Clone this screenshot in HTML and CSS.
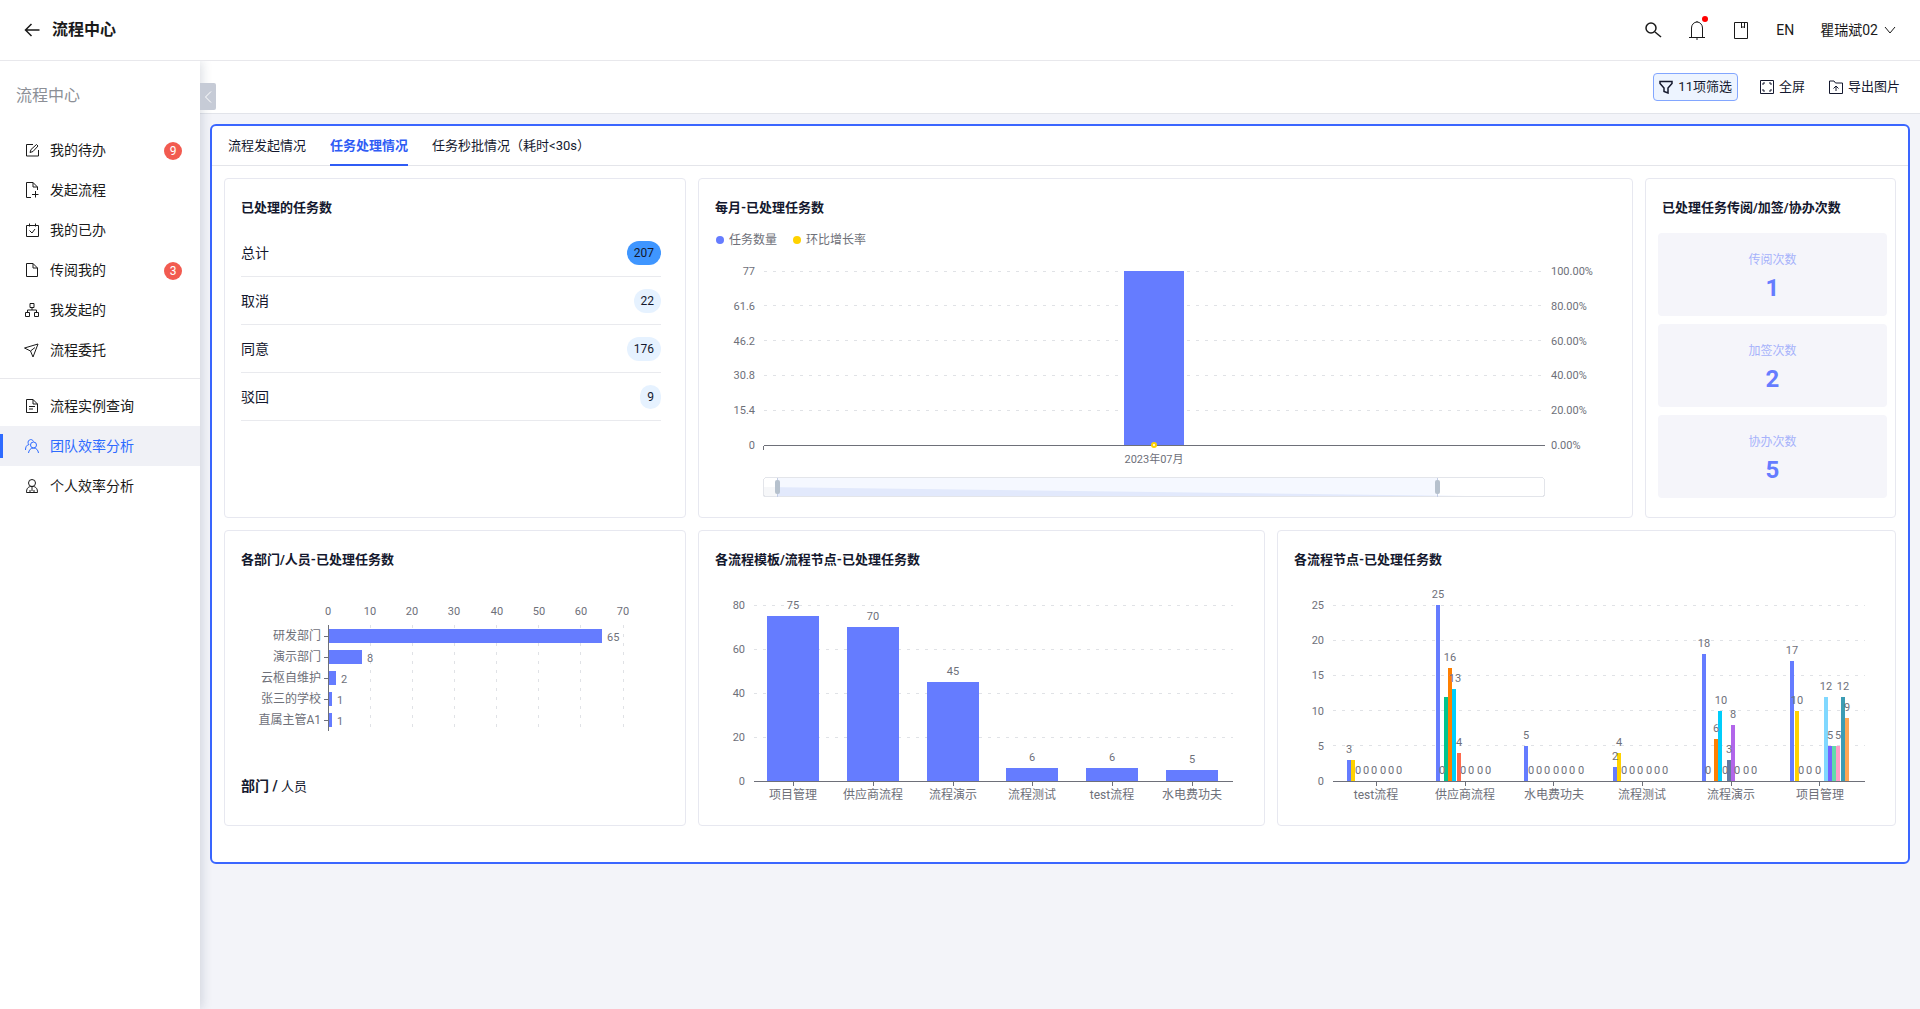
FILE: index.html
```
<!DOCTYPE html>
<html lang="zh-CN">
<head>
    <meta charset="UTF-8">
    <meta name="viewport" content="width=device-width, initial-scale=1.0">
    <title>流程中心</title>
    <link rel="stylesheet" href="styles.css">
</head>
<body>

    <header class="header">
        <button class="icon-btn back" aria-label="返回">
            <svg width="16" height="16" viewBox="0 0 16 16"><path d="M15.500 8H1.500M7.500 2L1.500 8l6 6"/></svg>
        </button>
        <h1>流程中心</h1>
        <div class="header-right">
            <button class="icon-btn search" aria-label="搜索">
                <svg width="18" height="18" viewBox="0 0 18 18"><circle cx="7" cy="7" r="5"/><path d="M11 11l6 5"/></svg>
            </button>
            <button class="icon-btn bell" aria-label="消息">
                <svg width="18" height="22" viewBox="0 0 18 22"><path d="M3.500 18V9a5.500 6 0 0 1 11 0v9M1 18.500h16M9 2v1M9 19v2"/></svg>
                <span class="dot"></span>
            </button>
            <button class="icon-btn" aria-label="文档">
                <svg width="18" height="20" viewBox="0 0 18 20"><path d="M2.500 2.500h13v16h-13zM9.500 3v5l1.500-1.500L12.500 8V3"/></svg>
            </button>
            <button class="text-btn">EN</button>
            <button class="text-btn user">瞿瑞斌02
                <svg width="12" height="10" viewBox="0 0 12 10"><path d="M1 2l5 6 5-6"/></svg>
            </button>
        </div>
    </header>

    <div class="layout">
        <aside class="sidebar">
            <h2>流程中心</h2>
            <nav>
                <a class="menu-item" href="#">
                    <svg width="16" height="16" viewBox="0 0 16 16"><path d="M9 2.500H2.500v11.500h12V8M6 10.500l1-3L12.500 2.500l1.500 1.500L9 9.500z"/></svg>
                    我的待办<span class="count">9</span>
                </a>
                <a class="menu-item" href="#">
                    <svg width="16" height="16" viewBox="0 0 16 16"><path d="M7 15.500H2.500V.5H9l4.500 4.500v3M9 .5V5h4.500M11.500 9v6.500M8 12.500h6.500"/></svg>
                    发起流程
                </a>
                <a class="menu-item" href="#">
                    <svg width="16" height="16" viewBox="0 0 16 16"><path d="M2.500 3.500h12v11h-12zM5.500 1.500v3M11.500 1.500v3M5.500 8.500l2.500 2.500 3-4"/></svg>
                    我的已办
                </a>
                <a class="menu-item" href="#">
                    <svg width="16" height="16" viewBox="0 0 16 16"><path d="M2.500 1.500H9l4.500 4.500v8.500h-11zM9 1.500V6h4.500"/></svg>
                    传阅我的<span class="count">3</span>
                </a>
                <a class="menu-item" href="#">
                    <svg width="16" height="16" viewBox="0 0 16 16"><path d="M6 1.500h4v4H6zM1.500 10.500h4v4h-4zM10.500 10.500h4v4h-4zM8 5.500V8M3.500 10.500V8h9v2.500"/></svg>
                    我发起的
                </a>
                <a class="menu-item" href="#">
                    <svg width="16" height="16" viewBox="0 0 16 16"><path d="M.5 6L14 2l-5 13-2.500-6zM6.500 9L11 5.500"/></svg>
                    流程委托
                </a>
                <hr>
                <a class="menu-item" href="#">
                    <svg width="16" height="16" viewBox="0 0 16 16"><path d="M2.500 1.500H9l4.500 4.500v8.500h-11zM9 1.500V6h4.500M5 8.500h6M5 11h4"/></svg>
                    流程实例查询
                </a>
                <a class="menu-item active" href="#">
                    <svg width="16" height="16" viewBox="0 0 16 16"><path d="M9.500 3.500a2.800 2.800 0 1 0-4.500 3M1.500 12c0-3 1-5 3.500-5.500"/><circle cx="9.500" cy="7" r="3"/><path d="M4.500 15c.5-3 2-5 5-5s4.500 2 5 5"/></svg>
                    团队效率分析
                </a>
                <a class="menu-item" href="#">
                    <svg width="16" height="16" viewBox="0 0 16 16"><circle cx="8" cy="5" r="3.500"/><path d="M2.500 14.500c0-4 1.500-5.500 4-6h3c2.500.5 4 2 4 6zM8 9v4M6 14.500V12M10 14.500V12"/></svg>
                    个人效率分析
                </a>
            </nav>
            <button class="collapse" aria-label="收起">
                <svg width="8" height="14" viewBox="0 0 8 14"><path d="M7 1.500L1.500 7 7 12.500"/></svg>
            </button>
        </aside>

        <main class="main">
            <div class="toolbar">
                <button class="tool filter">
                    <svg width="14" height="14" viewBox="0 0 14 14"><path d="M1 1.500h12v2L9 8v5l-4-1.500V8L1 3.500z"/></svg>
                    11项筛选
                </button>
                <button class="tool">
                    <svg width="14" height="14" viewBox="0 0 14 14"><path d="M.5.5h13v13H.5zM3 5V3h2M9 3h2v2M11 9v2H9M5 11H3V9"/></svg>
                    全屏
                </button>
                <button class="tool">
                    <svg width="14" height="14" viewBox="0 0 14 14"><path d="M.5 1H5l1.500 2h7v10.500H.5zM7 11V6M4.500 8.500L7 6l2.500 2.500"/></svg>
                    导出图片
                </button>
            </div>

            <section class="panel">
                <div class="tabs" role="tablist">
                    <button class="tab" role="tab">流程发起情况</button>
                    <button class="tab active" role="tab" aria-selected="true">任务处理情况</button>
                    <button class="tab" role="tab">任务秒批情况（耗时&lt;30s）</button>
                </div>

                <div class="row row-top">
                    <div class="card">
                        <h3>已处理的任务数</h3>
                        <ul class="totals">
                            <li>总计<span class="pill main-pill">207</span></li>
                            <li>取消<span class="pill">22</span></li>
                            <li>同意<span class="pill">176</span></li>
                            <li>驳回<span class="pill">9</span></li>
                        </ul>
                    </div>
                    <div class="card">
                        <h3>每月-已处理任务数</h3>
                        <div class="legend">
                            <span class="legend-item">任务数量</span>
                            <span class="legend-item rate">环比增长率</span>
                        </div>
                        <svg class="chart" id="monthChart" height="264"></svg>
                    </div>
                    <div class="card">
                        <h3>已处理任务传阅/加签/协办次数</h3>
                        <div class="stats">
                            <div class="stat"><span>传阅次数</span><strong>1</strong></div>
                            <div class="stat"><span>加签次数</span><strong>2</strong></div>
                            <div class="stat"><span>协办次数</span><strong>5</strong></div>
                        </div>
                    </div>
                </div>

                <div class="row row-bottom">
                    <div class="card">
                        <h3>各部门/人员-已处理任务数</h3>
                        <svg class="chart" id="deptChart" height="200"></svg>
                        <div class="crumb"><b>部门 /</b> <a href="#">人员</a></div>
                    </div>
                    <div class="card">
                        <h3>各流程模板/流程节点-已处理任务数</h3>
                        <svg class="chart" id="flowChart" height="250"></svg>
                    </div>
                    <div class="card">
                        <h3>各流程节点-已处理任务数</h3>
                        <svg class="chart" id="nodeChart" height="250"></svg>
                    </div>
                </div>
            </section>
        </main>
    </div>

    <script src="charts.js"></script>
</body>
</html>
```
FILE: styles.css
```
* {
    box-sizing: border-box;
}
body {
    margin: 0;
    min-height: 100vh;
    display: flex;
    flex-direction: column;
    font-family: Roboto, "Noto Sans CJK SC", sans-serif;
    font-size: 14px;
    line-height: 20px;
    color: #1a1a1a;
    background-color: #f3f4f9;
}
h1, h2, h3, ul {
    margin: 0;
    padding: 0;
}
button {
    padding: 0;
    border: none;
    background: none;
    font: inherit;
    color: inherit;
    cursor: pointer;
}
a {
    color: inherit;
    text-decoration: none;
}
svg {
    display: block;
    flex: none;
    fill: none;
    stroke: currentColor;
}

/* header */
.header {
    display: flex;
    align-items: center;
    height: 61px;
    padding: 0 24px;
    background-color: #ffffff;
    border-bottom: 1px solid #e8e8ec;
}
.header h1 {
    margin-left: 12px;
    font-size: 16px;
}
.back,
.search {
    stroke-width: 1.5;
}
.header-right {
    display: flex;
    align-items: center;
    gap: 26px;
    margin-left: auto;
}
.bell {
    position: relative;
}
.dot {
    position: absolute;
    top: -3px;
    right: -2px;
    width: 6px;
    height: 6px;
    border-radius: 50%;
    background-color: #ff0000;
}
.user {
    display: flex;
    align-items: center;
    gap: 6px;
}

/* sidebar */
.layout {
    display: flex;
    flex: 1;
}
.sidebar {
    position: relative;
    z-index: 1;
    width: 200px;
    flex: none;
    background-color: #ffffff;
    box-shadow: 2px 0 10px rgba(30, 50, 80, 0.16);
    clip-path: inset(0 -20px 0 0);
}
.sidebar h2 {
    padding: 23px 16px 22px;
    font-size: 16px;
    line-height: 24px;
    font-weight: normal;
    color: #8c8f96;
}
.sidebar hr {
    margin: 8px 0 7px;
    border: none;
    border-top: 1px solid #e8e8ec;
}
.menu-item {
    display: flex;
    align-items: center;
    gap: 10px;
    height: 40px;
    padding: 0 18px 0 24px;
}
.menu-item.active {
    color: #2e6bff;
    background: linear-gradient(#2e6bff, #2e6bff) left center / 3px 24px no-repeat #f0f1f6;
}
.count {
    width: 18px;
    margin: 2px 0 0 auto;
    border-radius: 9px;
    font-size: 12px;
    line-height: 18px;
    text-align: center;
    color: #ffffff;
    background-color: #f25b50;
}
.collapse {
    position: absolute;
    top: 22px;
    left: 200px;
    display: flex;
    align-items: center;
    justify-content: center;
    width: 16px;
    height: 27px;
    border-radius: 0 2px 2px 0;
    color: #ffffff;
    background-color: #c6cbd6;
}

/* toolbar */
.main {
    flex: 1;
    min-width: 0;
}
.toolbar {
    display: flex;
    align-items: center;
    justify-content: flex-end;
    gap: 20px;
    height: 53px;
    padding: 0 18px;
    font-size: 13px;
    color: #14182e;
    background-color: #ffffff;
    border-bottom: 1px solid #e2e4ea;
}
.tool {
    display: flex;
    align-items: center;
    gap: 5px;
    height: 28px;
    padding: 0 2px;
}
.filter {
    padding: 0 5px;
    border: 1px solid #82a6ff;
    border-radius: 4px;
    background-color: #edf4ff;
}
.filter svg {
    stroke-width: 1.5;
}

/* panel */
.panel {
    margin: 10px;
    padding-bottom: 36px;
    border: 2px solid #3a66ff;
    border-radius: 6px;
    background-color: #ffffff;
    color: #14182e;
}
.tabs {
    display: flex;
    gap: 24px;
    height: 40px;
    padding: 0 16px;
    border-bottom: 1px solid #e4e5ea;
}
.tab {
    height: 40px;
    padding-top: 2px;
    border-bottom: 2px solid transparent;
    font-size: 13px;
}
.tab.active {
    font-weight: bold;
    color: #2f5cf5;
    border-bottom-color: #2f5cf5;
}
.row {
    display: grid;
    gap: 12px;
    padding: 12px 12px 0;
}
.row-top {
    grid-template-columns: 462fr 935fr 251fr;
}
.row-bottom {
    grid-template-columns: 462fr 567fr 619fr;
}
.card {
    min-width: 0;
    padding-top: 17px;
    border: 1px solid #e7e8f0;
    border-radius: 4px;
}
.row-top .card {
    min-height: 340px;
}
.row-bottom .card {
    min-height: 296px;
}
.card h3 {
    padding: 0 16px;
    font-size: 13px;
    line-height: 24px;
    white-space: nowrap;
}

.totals {
    padding: 9px 24px 0 16px;
    list-style: none;
}
.totals li {
    display: flex;
    align-items: center;
    justify-content: space-between;
    height: 48px;
    border-bottom: 1px solid #e9eaee;
}
.pill {
    padding: 0 7px;
    border-radius: 12px;
    font-size: 12px;
    line-height: 24px;
    background-color: #e6f2ff;
}
.main-pill {
    background-color: #3f96ff;
}

.legend {
    display: flex;
    gap: 16px;
    margin-top: 8px;
    padding: 0 17px;
    font-size: 12px;
    line-height: 24px;
    color: #6e7079;
}
.legend-item {
    display: flex;
    align-items: center;
    gap: 5px;
}
.legend-item::before {
    content: "";
    width: 8px;
    height: 8px;
    border-radius: 50%;
    background-color: #657cff;
}
.legend-item.rate::before {
    background-color: #ffd200;
}

.stats {
    display: grid;
    gap: 8px;
    padding: 13px 8px 0 12px;
}
.stat {
    display: flex;
    flex-direction: column;
    align-items: center;
    height: 83px;
    padding-top: 18px;
    border-radius: 4px;
    background-color: #f5f5fa;
}
.stat span {
    font-size: 12px;
    line-height: 18px;
    color: #a6b2fb;
}
.stat strong {
    font-size: 24px;
    line-height: 38px;
    color: #657cff;
}

.crumb {
    padding: 0 16px;
    font-size: 13px;
    line-height: 28px;
}
.crumb b {
    font-size: 14px;
}

/* charts */
.chart {
    width: 100%;
    overflow: hidden;
    shape-rendering: crispEdges;
}
.chart text {
    fill: #6e7079;
    stroke: none;
}
.num {
    font-size: 11px;
}
.cat {
    font-size: 12px;
}
.end {
    text-anchor: end;
}
.middle {
    text-anchor: middle;
}
.grid {
    stroke: #e0e2e6;
    stroke-dasharray: 3 6;
}
.axis {
    stroke: #6e7079;
}
.bar {
    stroke: none;
}
.point {
    fill: #ffffff;
    stroke: #ffd200;
    stroke-width: 2;
    shape-rendering: auto;
}
.zoom-box {
    stroke: #e3e5ea;
}
.zoom-range {
    fill: #e5eeff;
    fill-opacity: 0.4;
    stroke: none;
}
.zoom-area {
    fill: #dfe7fb;
    stroke: none;
    shape-rendering: auto;
}
.zoom-rest {
    fill: #f6f7f9;
    stroke: none;
}
.zoom-line {
    stroke: #c3cde4;
}
.zoom-handle {
    fill: #b6c1cd;
    stroke: none;
    shape-rendering: auto;
}
```
FILE: charts.js
```
const COLORS = ['#657cff', '#ffd200', '#00c48c', '#ff8000', '#00cdfa', '#ff6a4d', '#6478a0',
    '#b266ea', '#80d8ff', '#7264ff', '#62dbab', '#ff9dc6', '#3c9cb4', '#ffa654'];

function add(svg, name, attrs, text) {
    const node = document.createElementNS('http://www.w3.org/2000/svg', name);
    for (const key in attrs) {
        node.setAttribute(key, attrs[key]);
    }
    if (text !== undefined) {
        node.textContent = text;
    }
    svg.appendChild(node);
}

function line(svg, cls, x1, y1, x2, y2) {
    const [a, b, c, d] = [x1, y1, x2, y2].map(v => Math.floor(v) + 0.5);
    add(svg, 'path', { class: cls, d: `M${a} ${b}L${c} ${d}` });
}

function label(svg, cls, x, y, text) {
    add(svg, 'text', { class: cls, x: Math.round(x), y: Math.round(y) + 4 }, text);
}

function bar(svg, x, y, width, height, color) {
    add(svg, 'rect', { class: 'bar', x, y, width, height, fill: color || COLORS[0] });
}

function start(id) {
    const svg = document.getElementById(id);
    svg.replaceChildren();
    return { svg, width: svg.clientWidth };
}

// horizontal grid lines with their labels on the left
function yAxis(svg, left, right, top, bottom, ticks) {
    ticks.forEach((tick, i) => {
        const y = bottom - (bottom - top) * i / (ticks.length - 1);
        if (i > 0) {
            line(svg, 'grid', left, y, right, y);
        }
        label(svg, 'num end', left - 8, y, tick);
    });
}

function drawMonth() {
    const { svg, width } = start('monthChart');
    const left = 64, right = width - 88, top = 19, bottom = 193;
    const center = Math.round((left + right) / 2);
    yAxis(svg, left, right, top, bottom, ['0', '15.4', '30.8', '46.2', '61.6', '77']);
    ['0.00%', '20.00%', '40.00%', '60.00%', '80.00%', '100.00%'].forEach((t, i) => {
        label(svg, 'num', right + 7, bottom - (bottom - top) * i / 5, t);
    });
    bar(svg, center - 30, top, 60, bottom - top);
    line(svg, 'axis', left, bottom, right, bottom);
    line(svg, 'axis', left, bottom, left, bottom + 4);
    add(svg, 'circle', { class: 'point', cx: center, cy: bottom, r: 2 });
    label(svg, 'num middle', center, bottom + 14, '2023年07月');

    // zoom slider
    const from = left + 14, to = right - 107;
    add(svg, 'path', { class: 'zoom-area', d: `M${left} 235L${right} 245H${left}z` });
    add(svg, 'rect', { class: 'zoom-rest', x: left, y: 235, width: from - left, height: 10 });
    add(svg, 'rect', { class: 'zoom-range', x: from, y: 225, width: to - from, height: 20 });
    add(svg, 'rect', { class: 'zoom-box', x: left + 0.5, y: 225.5, width: right - left, height: 19, rx: 3 });
    [from, to].forEach(x => {
        line(svg, 'zoom-line', x, 225, x, 244);
        add(svg, 'rect', { class: 'zoom-handle', x: x - 2, y: 228, width: 5, height: 14, rx: 2 });
    });
}

function drawDept() {
    const { svg, width } = start('deptChart');
    const left = 103, right = width - 62, top = 52, bottom = 158;
    const data = [['研发部门', 65], ['演示部门', 8], ['云枢自维护', 2], ['张三的学校', 1], ['直属主管A1', 1]];
    const unit = (right - left) / 70;
    for (let v = 0; v <= 70; v += 10) {
        if (v > 0) {
            line(svg, 'grid', left + v * unit, top, left + v * unit, bottom);
        }
        label(svg, 'num middle', left + v * unit, 39, v);
    }
    const step = (bottom - top) / data.length;
    data.forEach(([name, value], i) => {
        const y = Math.round(top + 1 + step * (i + 0.5));
        bar(svg, left, y - 7, Math.round(value * unit), 14);
        line(svg, 'axis', left - 5, y, left, y);
        label(svg, 'cat end', left - 7, y, name);
        label(svg, 'num', left + value * unit + 5, y + 1, value);
    });
    line(svg, 'axis', left, top, left, bottom);
}

function drawFlow() {
    const { svg, width } = start('flowChart');
    const left = 54, right = width - 32, top = 33, bottom = 209;
    const data = [['项目管理', 75], ['供应商流程', 70], ['流程演示', 45], ['流程测试', 6], ['test流程', 6], ['水电费功夫', 5]];
    yAxis(svg, left, right, top, bottom, [0, 20, 40, 60, 80]);
    const step = (right - left) / data.length;
    data.forEach(([name, value], i) => {
        const x = Math.round(left + step * (i + 0.5));
        const h = Math.round(value * (bottom - top) / 80);
        bar(svg, x - 26, bottom - h, 52, h);
        line(svg, 'axis', x, bottom, x, bottom + 4);
        label(svg, 'num middle', x, bottom - h - 11, value);
        label(svg, 'cat middle', x, bottom + 14, name);
    });
    line(svg, 'axis', left, bottom, right, bottom);
}

function drawNode() {
    const { svg, width } = start('nodeChart');
    const left = 54, right = width - 31, top = 33, bottom = 209;
    // values and the zero labels that fit, by series index
    const data = [
        { name: 'test流程', values: { 0: 3, 1: 3 }, zeros: [2, 4, 6, 8, 10, 12], hide: [1] },
        { name: '供应商流程', values: { 0: 25, 2: 12, 3: 16, 4: 13, 5: 4 }, zeros: [1, 6, 8, 10, 12], hide: [2] },
        { name: '水电费功夫', values: { 0: 5 }, zeros: [1, 3, 5, 7, 9, 11, 13], hide: [] },
        { name: '流程测试', values: { 0: 2, 1: 4 }, zeros: [2, 4, 6, 8, 10, 12], hide: [] },
        { name: '流程演示', values: { 0: 18, 3: 6, 4: 10, 6: 3, 7: 8 }, zeros: [1, 5, 8, 10, 12], hide: [] },
        { name: '项目管理', values: { 0: 17, 1: 10, 8: 12, 9: 5, 10: 5, 11: 5, 12: 12, 13: 9 }, zeros: [2, 4, 6], hide: [10] }
    ];
    yAxis(svg, left, right, top, bottom, [0, 5, 10, 15, 20, 25]);
    const step = (right - left) / data.length;
    const pitch = step * 0.66 / COLORS.length;
    data.forEach((group, i) => {
        const x = left + step * (i + 0.5);
        const first = x - pitch * COLORS.length / 2;
        const labels = group.zeros.map(n => [n, 0]);
        for (const n in group.values) {
            const h = Math.round(group.values[n] * (bottom - top) / 25);
            bar(svg, Math.round(first + n * pitch), bottom - h, 4, h, COLORS[n]);
            if (!group.hide.includes(Number(n))) {
                labels.push([Number(n), group.values[n]]);
            }
        }
        labels.forEach(([n, value]) => {
            const y = bottom - value * (bottom - top) / 25 - 11;
            label(svg, 'num middle', first + (n + 0.5) * pitch, y, value);
        });
        line(svg, 'axis', x, bottom, x, bottom + 4);
        label(svg, 'cat middle', x, bottom + 14, group.name);
    });
    line(svg, 'axis', left, bottom, right, bottom);
}

function drawAll() {
    drawMonth();
    drawDept();
    drawFlow();
    drawNode();
}

drawAll();
window.addEventListener('resize', drawAll);
```
